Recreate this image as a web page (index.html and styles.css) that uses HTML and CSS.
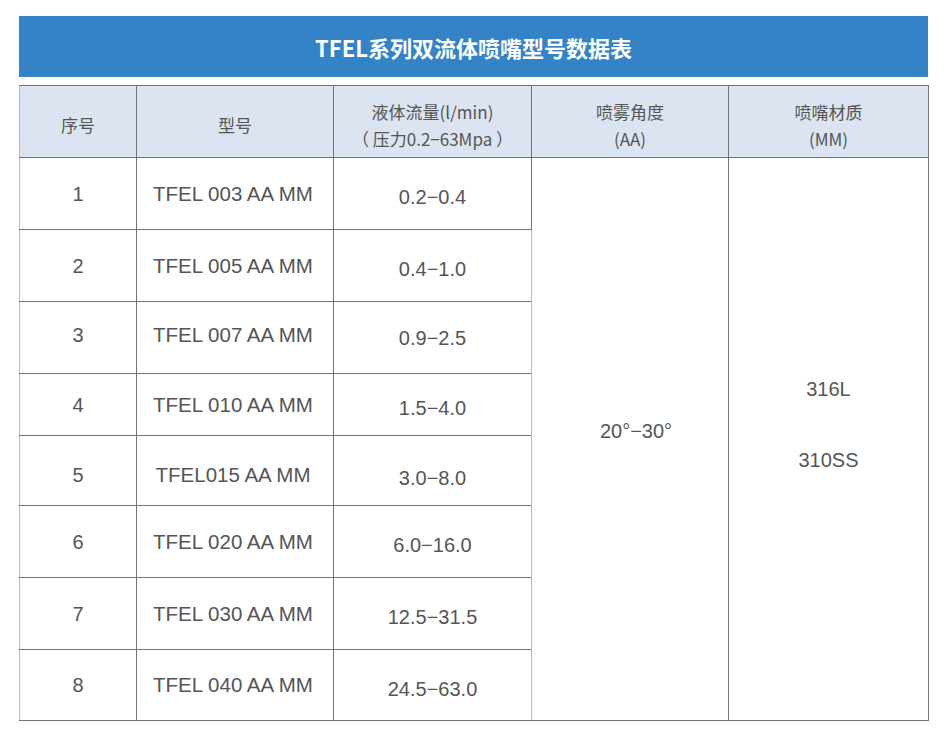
FILE: index.html
```html
<!DOCTYPE html>
<html lang="zh-CN">
<head>
<meta charset="utf-8">
<title>TFEL系列双流体喷嘴型号数据表</title>
<link rel="stylesheet" href="styles.css">
</head>
<body>
<div class="page">
  <div class="title-bar">TFEL系列双流体喷嘴型号数据表</div>
  <table class="spec">
    <colgroup>
      <col class="c-no"><col class="c-model"><col class="c-flow"><col class="c-angle"><col class="c-mat">
    </colgroup>
    <thead>
      <tr class="h-row">
        <th class="edge-left">序号</th>
        <th>型号</th>
        <th>液体流量(l/min)<br>（ 压力0.2−63Mpa ）</th>
        <th class="light-left">喷雾角度<br>(AA)</th>
        <th>喷嘴材质<br>(MM)</th>
      </tr>
    </thead>
    <tbody>
      <tr class="r72">
        <td class="edge-left">1</td><td class="model">TFEL 003 AA MM</td><td class="flow">0.2−0.4</td>
        <td class="angle light-left" rowspan="8">20°−30°</td>
        <td class="mat" rowspan="8"><p>316L</p><p>310SS</p></td>
      </tr>
      <tr class="r72"><td class="edge-left">2</td><td class="model">TFEL 005 AA MM</td><td class="flow">0.4−1.0</td></tr>
      <tr class="r72 light-top up"><td class="edge-left">3</td><td class="model">TFEL 007 AA MM</td><td class="flow">0.9−2.5</td></tr>
      <tr class="r62 light-top"><td class="edge-left">4</td><td class="model">TFEL 010 AA MM</td><td class="flow">1.5−4.0</td></tr>
      <tr class="r70 down"><td class="edge-left">5</td><td class="model">TFEL015 AA MM</td><td class="flow">3.0−8.0</td></tr>
      <tr class="r72"><td class="edge-left">6</td><td class="model">TFEL 020 AA MM</td><td class="flow">6.0−16.0</td></tr>
      <tr class="r72"><td class="edge-left">7</td><td class="model">TFEL 030 AA MM</td><td class="flow">12.5−31.5</td></tr>
      <tr class="r71"><td class="edge-left">8</td><td class="model">TFEL 040 AA MM</td><td class="flow">24.5−63.0</td></tr>
    </tbody>
  </table>
</div>
</body>
</html>
```

FILE: styles.css
```css
html, body {
  margin: 0;
  padding: 0;
  background: #ffffff;
}

.page {
  padding: 16px 19px 0 19px;
  width: 909px;
}

.title-bar {
  height: 61px;
  background: #3483c6;
  color: #ffffff;
  font-family: "Noto Sans CJK SC", "Liberation Sans", sans-serif;
  font-weight: 700;
  font-size: 22px;
  display: flex;
  align-items: center;
  justify-content: center;
  margin-bottom: 8px;
}

.spec {
  width: 909px;
  border-collapse: collapse;
  table-layout: fixed;
}

.c-no { width: 117px; }
.c-model { width: 197px; }
.c-flow { width: 198px; }
.c-angle { width: 197px; }
.c-mat { width: 200px; }

.spec th,
.spec td {
  border: 1px solid #727272;
  text-align: center;
  padding: 0;
  color: #555555;
}

.spec th {
  background: #dbe4f0;
  font-family: "Noto Sans CJK SC", "Liberation Sans", sans-serif;
  font-weight: 400;
  font-size: 17px;
  line-height: 27px;
  padding-top: 6px;
}

.h-row { height: 72px; }

.spec td {
  font-family: "Liberation Sans", "Noto Sans CJK SC", sans-serif;
  font-size: 20px;
  line-height: 24px;
}

.spec td.model {
  font-size: 20.5px;
  padding-right: 4px;
}

.spec .edge-left {
  border-left-color: #b8b8b8;
}

.spec .light-left {
  border-left-color: #b8b8b8;
}

.light-top > td {
  border-top-color: #b0b0b0;
}

.r72 { height: 72px; }
.r62 { height: 62px; }
.r70 { height: 70px; }
.r71 { height: 71px; }

.up > td {
  padding-bottom: 6px;
}

.down > td {
  padding-top: 8px;
}

.spec td.flow {
  padding-top: 7px;
  padding-bottom: 0;
}

.spec .up > td.flow {
  padding-top: 0;
}

.spec .down > td.flow {
  padding-top: 14px;
}

.spec td.angle {
  padding-bottom: 16px;
  padding-left: 12px;
}

.spec td.mat {
  padding-bottom: 29px;
}

.mat p {
  margin: 0;
  line-height: 71px;
}
```
